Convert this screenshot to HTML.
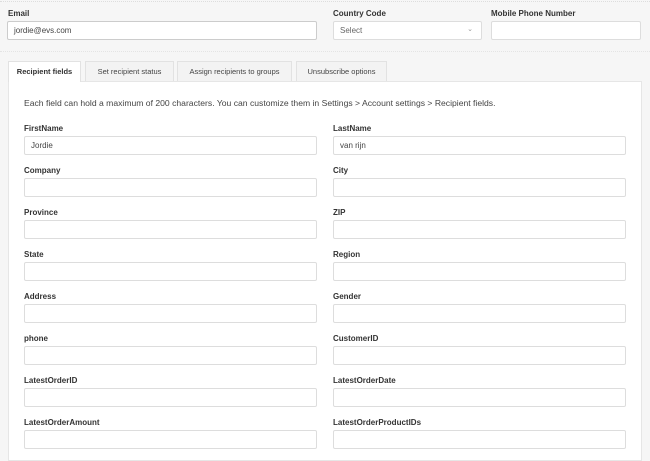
<!DOCTYPE html><html><head><style>
body{margin:0;width:650px;height:456px;overflow:hidden;background:#f6f6f6;font-family:"Liberation Sans",sans-serif;color:#333;position:relative}
.a{position:absolute}
.l{position:absolute;font-size:8px;font-weight:bold;color:#333}
.i{position:absolute;background:#fff;border:1px solid #ddd;border-radius:2px;box-sizing:border-box;height:19px;font-size:8px;color:#444;padding:5px 6px;line-height:8px}
.t{position:absolute;top:61px;height:20px;box-sizing:border-box;border:1px solid #e2e2e2;border-bottom:none;background:#f3f3f3;font-size:7.5px;text-align:center;line-height:20px;color:#444}
</style></head><body>
<div class="a" style="left:0;top:1px;width:650px;border-top:1px dotted #ddd"></div>
<div class="l" style="left:8px;top:9px">Email</div>
<div class="i" style="left:7px;top:21px;width:310px;height:19px;border-color:#ccc">jordie@evs.com</div>
<div class="l" style="left:333px;top:9px">Country Code</div>
<div class="i" style="left:333px;top:21px;width:149px;color:#666">Select<span style="position:absolute;right:8px;top:4px;font-size:7px;color:#999">⌄</span></div>
<div class="l" style="left:491px;top:9px">Mobile Phone Number</div>
<div class="i" style="left:491px;top:21px;width:150px"></div>
<div class="a" style="left:0;top:51px;width:650px;border-top:1px dotted #e4e4e4"></div>
<div class="a" style="left:8px;top:81px;width:634px;height:380px;background:#fff;border:1px solid #e6e6e6;box-sizing:border-box"></div>
<div class="t" style="left:8px;width:73px;background:#fff;height:21px;font-weight:bold;color:#333">Recipient fields</div>
<div class="t" style="left:85px;width:89px">Set recipient status</div>
<div class="t" style="left:177px;width:115px">Assign recipients to groups</div>
<div class="t" style="left:296px;width:91px">Unsubscribe options</div>
<div class="a" style="left:24px;top:98px;font-size:8.6px;color:#444">Each field can hold a maximum of 200 characters. You can customize them in Settings &gt; Account settings &gt; Recipient fields.</div>
<div id="f"></div>
<script>
var r=[["FirstName","Jordie","LastName","van rijn"],["Company","","City",""],["Province","","ZIP",""],["State","","Region",""],["Address","","Gender",""],["phone","","CustomerID",""],["LatestOrderID","","LatestOrderDate",""],["LatestOrderAmount","","LatestOrderProductIDs",""]],h="";
r.forEach(function(x,k){var y=124+k*42;
h+='<div class="l" style="left:24px;top:'+y+'px">'+x[0]+'</div><div class="i" style="left:24px;top:'+(y+12)+'px;width:293px">'+x[1]+'</div>';
h+='<div class="l" style="left:333px;top:'+y+'px">'+x[2]+'</div><div class="i" style="left:333px;top:'+(y+12)+'px;width:293px">'+x[3]+'</div>';});
document.getElementById("f").innerHTML=h;
</script>
</body></html>
